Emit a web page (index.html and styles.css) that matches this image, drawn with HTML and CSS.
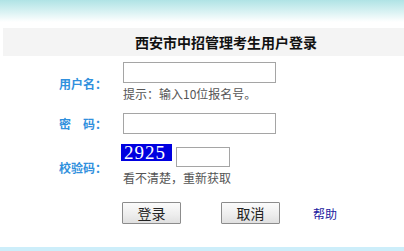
FILE: index.html
```html
<!DOCTYPE html>
<html lang="zh-CN">
<head>
<meta charset="utf-8">
<title>西安市中招管理考生用户登录</title>
<link rel="stylesheet" href="styles.css">
</head>
<body>
<div class="topband"></div>
<div class="titlebar"><h1 class="title">西安市中招管理考生用户登录</h1></div>
<form class="form">
  <div class="row row-user">
    <label class="label">用户名：</label>
    <div class="field">
      <input class="input" type="text">
      <div class="hint">提示：输入10位报名号。</div>
    </div>
  </div>
  <div class="row row-pass">
    <label class="label">密　码：</label>
    <div class="field">
      <input class="input" type="password">
    </div>
  </div>
  <div class="row row-code">
    <label class="label">校验码：</label>
    <div class="field">
      <div class="codeline">
        <span class="captcha">2925</span>
        <input class="input input-code" type="text">
      </div>
      <div class="hint">看不清楚，重新获取</div>
    </div>
  </div>
  <div class="actions">
    <button class="btn" type="button">登录</button>
    <button class="btn" type="button">取消</button>
    <a class="help" href="#">帮助</a>
  </div>
</form>
<div class="bottombar"></div>
</body>
</html>
```
FILE: styles.css
```css
html, body {
  margin: 0;
  padding: 0;
  background: #ffffff;
  font-family: "Noto Sans CJK SC", "Noto Sans", sans-serif;
  width: 404px;
  height: 251px;
  overflow: hidden;
}
.topband {
  height: 22px;
  background: linear-gradient(to bottom, #b0e3e5 0%, #d6f1f2 50%, #ffffff 100%);
}
.titlebar {
  margin: 6px 0 0 3px;
  height: 28px;
  background: #f4f4f4;
  display: flex;
  align-items: center;
  padding-left: 132px;
}
.title {
  margin: 0;
  font-size: 14px;
  font-weight: bold;
  color: #111111;
  line-height: 28px;
}
.form {
  margin: 0;
  padding-top: 6px;
}
.row {
  display: flex;
  align-items: center;
}
.label {
  width: 49px;
  margin-left: 59px;
  margin-right: 15px;
  font-size: 12px;
  font-weight: bold;
  color: #3090dd;
  white-space: nowrap;
}
.row-user .label { margin-top: 3px; }
.row-code .label { margin-top: 5px; }
.field {
  display: flex;
  flex-direction: column;
}
.input {
  box-sizing: border-box;
  width: 153px;
  height: 21px;
  margin: 0;
  border: 1px solid #a5a5a5;
  background: #ffffff;
  padding: 0 3px;
}
.hint {
  margin-top: 2px;
  font-size: 12px;
  line-height: 17px;
  color: #555555;
  white-space: nowrap;
}
.row-pass { margin-top: 11px; }
.row-code { margin-top: 10px; }
.codeline {
  display: flex;
  align-items: flex-start;
}
.captcha {
  display: block;
  box-sizing: border-box;
  width: 51px;
  height: 17px;
  margin-left: -2px;
  padding-left: 3px;
  background: #0000e0;
  color: #ffffff;
  font-family: "Liberation Serif", serif;
  font-size: 19px;
  font-weight: normal;
  line-height: 17px;
  letter-spacing: 1px;
}
.input-code {
  width: 54px;
  height: 20px;
  margin-top: 3px;
  margin-left: 4px;
}
.actions {
  display: flex;
  align-items: center;
  margin-top: 16px;
  padding-left: 122px;
}
.btn {
  box-sizing: border-box;
  width: 59px;
  height: 22px;
  margin: 0;
  padding: 0;
  border: 1px solid #8c8c8c;
  border-radius: 1px;
  background: linear-gradient(to bottom, #fbfbfb 0%, #eeeeee 55%, #e0e0e0 100%);
  font-family: "Noto Sans CJK SC", sans-serif;
  font-size: 14px;
  line-height: 20px;
  color: #222222;
}
.btn + .btn { margin-left: 40px; }
.help {
  margin-left: 33px;
  font-size: 12px;
  color: #1a1aa0;
  text-decoration: none;
}
.bottombar {
  margin-top: 23px;
  height: 4px;
  background: #cdeefa;
}
```
